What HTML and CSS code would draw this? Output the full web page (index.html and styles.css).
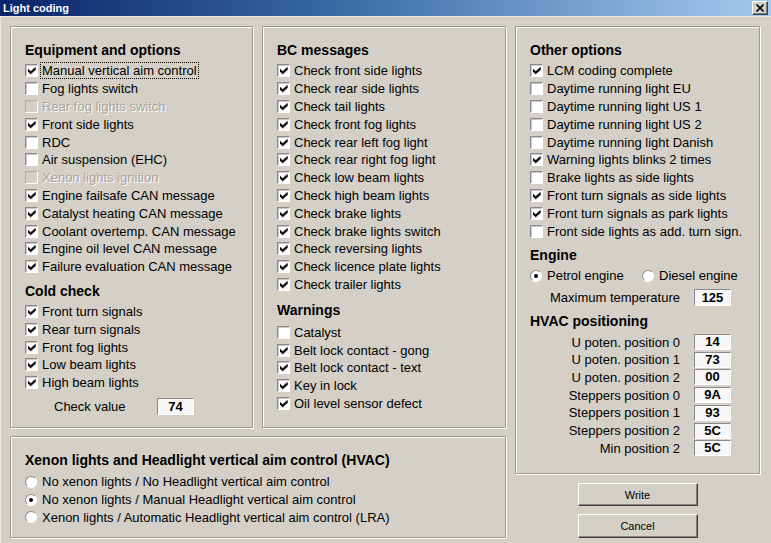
FILE: index.html
```html
<!DOCTYPE html>
<html lang="en">
<head>
<meta charset="utf-8">
<title>Light coding</title>
<link rel="stylesheet" href="styles.css">
</head>
<body>
<svg class="defs" width="0" height="0" aria-hidden="true">
  <symbol id="chk" viewBox="0 0 11 11">
    <path d="M2 4.2h1.1v3h-1.1z M3.1 5.2h1.1v3h-1.1z M4.2 6.2h1.1v3h-1.1z M5.3 5.2h1.1v3h-1.1z M6.4 4.2h1.1v3h-1.1z M7.5 3.2h1.1v3h-1.1z M8.6 2.2h1.1v3h-1.1z" fill="#000"/>
  </symbol>
</svg>
<div class="window">
  <header class="titlebar">
    <span class="title">Light coding</span>
    <span class="close"><svg width="14" height="12" viewBox="0 0 14 12"><path d="M3.5 2.5 L10.5 9.5 M10.5 2.5 L3.5 9.5" stroke="#000" stroke-width="1.7"/></svg></span>
  </header>
  <main class="client">
    <section class="group">
      <h2 class="gh">Equipment and options</h2>
      <div class="item"><span class="cb"><svg><use href="#chk"/></svg></span><span class="lbl focus">Manual vertical aim control</span></div>
      <div class="item"><span class="cb"></span><span class="lbl">Fog lights switch</span></div>
      <div class="item"><span class="cb dis"></span><span class="lbl dis">Rear fog lights switch</span></div>
      <div class="item"><span class="cb"><svg><use href="#chk"/></svg></span><span class="lbl">Front side lights</span></div>
      <div class="item"><span class="cb"></span><span class="lbl">RDC</span></div>
      <div class="item"><span class="cb"></span><span class="lbl">Air suspension (EHC)</span></div>
      <div class="item"><span class="cb dis"></span><span class="lbl dis">Xenon lights ignition</span></div>
      <div class="item"><span class="cb"><svg><use href="#chk"/></svg></span><span class="lbl">Engine failsafe CAN message</span></div>
      <div class="item"><span class="cb"><svg><use href="#chk"/></svg></span><span class="lbl">Catalyst heating CAN message</span></div>
      <div class="item"><span class="cb"><svg><use href="#chk"/></svg></span><span class="lbl">Coolant overtemp. CAN message</span></div>
      <div class="item"><span class="cb"><svg><use href="#chk"/></svg></span><span class="lbl">Engine oil level CAN message</span></div>
      <div class="item"><span class="cb"><svg><use href="#chk"/></svg></span><span class="lbl">Failure evaluation CAN message</span></div>
      <h2 class="gh">Cold check</h2>
      <div class="item"><span class="cb"><svg><use href="#chk"/></svg></span><span class="lbl">Front turn signals</span></div>
      <div class="item"><span class="cb"><svg><use href="#chk"/></svg></span><span class="lbl">Rear turn signals</span></div>
      <div class="item"><span class="cb"><svg><use href="#chk"/></svg></span><span class="lbl">Front fog lights</span></div>
      <div class="item"><span class="cb"><svg><use href="#chk"/></svg></span><span class="lbl">Low beam lights</span></div>
      <div class="item"><span class="cb"><svg><use href="#chk"/></svg></span><span class="lbl">High beam lights</span></div>
      <div class="cv"><span class="cv-lbl">Check value</span><span class="val">74</span></div>
    </section>

    <section class="group">
      <h2 class="gh">BC messages</h2>
      <div class="item"><span class="cb"><svg><use href="#chk"/></svg></span><span class="lbl">Check front side lights</span></div>
      <div class="item"><span class="cb"><svg><use href="#chk"/></svg></span><span class="lbl">Check rear side lights</span></div>
      <div class="item"><span class="cb"><svg><use href="#chk"/></svg></span><span class="lbl">Check tail lights</span></div>
      <div class="item"><span class="cb"><svg><use href="#chk"/></svg></span><span class="lbl">Check front fog lights</span></div>
      <div class="item"><span class="cb"><svg><use href="#chk"/></svg></span><span class="lbl">Check rear left fog light</span></div>
      <div class="item"><span class="cb"><svg><use href="#chk"/></svg></span><span class="lbl">Check rear right fog light</span></div>
      <div class="item"><span class="cb"><svg><use href="#chk"/></svg></span><span class="lbl">Check low beam lights</span></div>
      <div class="item"><span class="cb"><svg><use href="#chk"/></svg></span><span class="lbl">Check high beam lights</span></div>
      <div class="item"><span class="cb"><svg><use href="#chk"/></svg></span><span class="lbl">Check brake lights</span></div>
      <div class="item"><span class="cb"><svg><use href="#chk"/></svg></span><span class="lbl">Check brake lights switch</span></div>
      <div class="item"><span class="cb"><svg><use href="#chk"/></svg></span><span class="lbl">Check reversing lights</span></div>
      <div class="item"><span class="cb"><svg><use href="#chk"/></svg></span><span class="lbl">Check licence plate lights</span></div>
      <div class="item"><span class="cb"><svg><use href="#chk"/></svg></span><span class="lbl">Check trailer lights</span></div>
      <h2 class="gh warn">Warnings</h2>
      <div class="item"><span class="cb"></span><span class="lbl">Catalyst</span></div>
      <div class="item"><span class="cb"><svg><use href="#chk"/></svg></span><span class="lbl">Belt lock contact - gong</span></div>
      <div class="item"><span class="cb"><svg><use href="#chk"/></svg></span><span class="lbl">Belt lock contact - text</span></div>
      <div class="item"><span class="cb"><svg><use href="#chk"/></svg></span><span class="lbl">Key in lock</span></div>
      <div class="item"><span class="cb"><svg><use href="#chk"/></svg></span><span class="lbl">Oil level sensor defect</span></div>
    </section>

    <div class="rcol">
      <section class="group g3">
        <h2 class="gh">Other options</h2>
        <div class="item"><span class="cb"><svg><use href="#chk"/></svg></span><span class="lbl">LCM coding complete</span></div>
        <div class="item"><span class="cb"></span><span class="lbl">Daytime running light EU</span></div>
        <div class="item"><span class="cb"></span><span class="lbl">Daytime running light US 1</span></div>
        <div class="item"><span class="cb"></span><span class="lbl">Daytime running light US 2</span></div>
        <div class="item"><span class="cb"></span><span class="lbl">Daytime running light Danish</span></div>
        <div class="item"><span class="cb"><svg><use href="#chk"/></svg></span><span class="lbl">Warning lights blinks 2 times</span></div>
        <div class="item"><span class="cb"></span><span class="lbl">Brake lights as side lights</span></div>
        <div class="item"><span class="cb"><svg><use href="#chk"/></svg></span><span class="lbl">Front turn signals as side lights</span></div>
        <div class="item"><span class="cb"><svg><use href="#chk"/></svg></span><span class="lbl">Front turn signals as park lights</span></div>
        <div class="item"><span class="cb"></span><span class="lbl">Front side lights as add. turn sign.</span></div>
        <h2 class="gh">Engine</h2>
        <div class="item engine">
          <span class="opt first"><span class="rb on"></span><span class="lbl">Petrol engine</span></span>
          <span class="opt"><span class="rb"></span><span class="lbl">Diesel engine</span></span>
        </div>
        <div class="hv maxt"><span class="hv-lbl">Maximum temperature</span><span class="val">125</span></div>
        <h2 class="gh">HVAC positioning</h2>
        <div class="hv"><span class="hv-lbl">U poten. position 0</span><span class="val sm">14</span></div>
        <div class="hv"><span class="hv-lbl">U poten. position 1</span><span class="val sm">73</span></div>
        <div class="hv"><span class="hv-lbl">U poten. position 2</span><span class="val sm">00</span></div>
        <div class="hv"><span class="hv-lbl">Steppers position 0</span><span class="val sm">9A</span></div>
        <div class="hv"><span class="hv-lbl">Steppers position 1</span><span class="val sm">93</span></div>
        <div class="hv"><span class="hv-lbl">Steppers position 2</span><span class="val sm">5C</span></div>
        <div class="hv"><span class="hv-lbl">Min position 2</span><span class="val sm">5C</span></div>
      </section>
      <button class="btn write">Write</button>
      <button class="btn cancel">Cancel</button>
    </div>

    <section class="group xenon">
      <h2 class="gh">Xenon lights and Headlight vertical aim control (HVAC)</h2>
      <div class="item"><span class="rb"></span><span class="lbl">No xenon lights / No Headlight vertical aim control</span></div>
      <div class="item"><span class="rb on"></span><span class="lbl">No xenon lights / Manual Headlight vertical aim control</span></div>
      <div class="item"><span class="rb"></span><span class="lbl">Xenon lights / Automatic Headlight vertical aim control (LRA)</span></div>
    </section>
  </main>
</div>
</body>
</html>
```

FILE: styles.css
```css
* { box-sizing: border-box; }

html, body {
  margin: 0;
  padding: 0;
}

body {
  width: 771px;
  height: 543px;
  overflow: hidden;
  background: #d4d0c8;
  font-family: "Liberation Sans", Arial, sans-serif;
  font-size: 13px;
  color: #000;
}

.defs { position: absolute; width: 0; height: 0; }

.window {
  height: 543px;
  box-shadow: inset 1px 0 0 #ece9e3;
}

.titlebar {
  height: 17px;
  display: flex;
  align-items: center;
  justify-content: space-between;
  background: linear-gradient(to right, #0a246a 0%, #3a6ea5 45%, #a6caf0 100%);
  border-bottom: 1px solid #ebe9e4;
  padding: 0 3px 0 3px;
}

.title {
  color: #fff;
  font-weight: bold;
  font-size: 11px;
  line-height: 16px;
}

.close {
  width: 16px;
  height: 14px;
  display: flex;
  align-items: center;
  justify-content: center;
  background: #d4d0c8;
  border: 1px solid;
  border-color: #fff #404040 #404040 #fff;
  box-shadow: inset -1px -1px 0 #808080;
}

.close svg { display: block; }

.client {
  display: grid;
  grid-template-columns: 243px 244px 245px;
  grid-template-rows: 402px 102px;
  column-gap: 9px;
  row-gap: 8px;
  padding: 9px 0 0 10px;
}

.group {
  border: 1px solid #a09c94;
  box-shadow: inset 1px 1px 0 #fff, 1px 1px 0 #fff;
  padding: 8px 14px 0 14px;
}

.gh {
  font-size: 14px;
  font-weight: bold;
  line-height: 18px;
  margin: 6px 0 3px 0;
  white-space: nowrap;
}

.gh.warn {
  margin-top: 8px;
  margin-bottom: 4px;
}

.item {
  height: 17.8px;
  display: flex;
  align-items: center;
  white-space: nowrap;
}

.lbl { line-height: 15px; }

.lbl.focus {
  outline: 1px dotted #000;
  padding: 0 1px;
  margin: 0 -1px;
}

.lbl.dis {
  color: #a8a49c;
  text-shadow: 1px 1px 0 #fff;
}

.cb {
  flex: none;
  width: 13px;
  height: 13px;
  margin-right: 4px;
  border: 1px solid;
  border-color: #8a8a8a #fff #fff #8a8a8a;
  background: #fff;
  box-shadow: inset 1px 1px 0 #c8c8c8;
}

.cb svg {
  display: block;
  width: 11px;
  height: 11px;
}

.cb.dis {
  background: #d4d0c8;
  border-color: #b0aca4 #fff #fff #b0aca4;
  box-shadow: none;
}

.rb {
  flex: none;
  position: relative;
  width: 12px;
  height: 12px;
  margin-right: 5px;
  border-radius: 50%;
  border: 1px solid;
  border-color: #8a8a8a #fff #fff #8a8a8a;
  background: #fff;
}

.rb.on::after {
  content: "";
  position: absolute;
  left: 3px;
  top: 3px;
  width: 4px;
  height: 4px;
  border-radius: 50%;
  background: #000;
}

.engine { margin-top: 1px; }

.opt {
  display: flex;
  align-items: center;
}

.opt.first { width: 112px; }

.val {
  display: block;
  width: 37px;
  height: 17px;
  border: 1px solid;
  border-color: #8a8a8a #fff #fff #8a8a8a;
  background: #f6f6f6;
  font-weight: bold;
  font-size: 13px;
  line-height: 15px;
  text-align: center;
}

.val.sm { height: 16px; line-height: 14px; }

.cv {
  display: flex;
  align-items: center;
  height: 18px;
  margin-top: 6px;
  padding-left: 29px;
}

.cv-lbl { width: 103px; }

.hv {
  display: grid;
  grid-template-columns: 150px 37px;
  column-gap: 14px;
  align-items: center;
  height: 17.7px;
  white-space: nowrap;
}

.hv-lbl { text-align: right; }

.hv.maxt {
  height: 18px;
  margin-top: 3.5px;
}

.rcol {
  grid-column: 3;
  grid-row: 1 / span 2;
  display: flex;
  flex-direction: column;
  align-items: center;
}

.g3 {
  align-self: stretch;
  height: 450px;
}

.btn {
  width: 120px;
  height: 23px;
  margin: 9px 0 0 0;
  padding: 0;
  background: #d4d0c8;
  border: 1px solid;
  border-color: #fff #404040 #404040 #fff;
  box-shadow: inset -1px -1px 0 #808080;
  font-family: "Liberation Sans", Arial, sans-serif;
  font-size: 11px;
  color: #000;
}

.btn.cancel {
  height: 24px;
  margin-top: 8px;
}

.xenon {
  grid-column: 1 / span 2;
  grid-row: 2;
}

.xenon .gh { margin-bottom: 4px; }
```
